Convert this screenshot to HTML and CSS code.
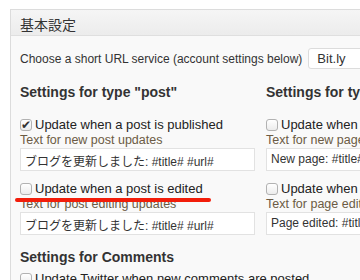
FILE: index.html
```html
<!DOCTYPE html>
<html lang="ja">
<head>
  <meta charset="UTF-8">
  <title>基本設定</title>
  <link rel="stylesheet" href="styles.css">
</head>
<body>
  <div class="panel">
    <div class="panel-head">基本設定</div>
    <div class="panel-body">
      <div class="service-row">
        <span>Choose a short URL service (account settings below)</span>
        <div class="select-box">Bit.ly</div>
      </div>

      <div class="columns">
        <div class="col">
          <h3>Settings for type "post"</h3>
          <label class="check"><span class="box checked"></span>Update when a post is published</label>
          <div class="hint">Text for new post updates</div>
          <div class="field">ブログを更新しました: #title# #url#</div>
          <label class="check marked"><span class="box"></span>Update when a post is edited<span class="mark"></span></label>
          <div class="hint">Text for post editing updates</div>
          <div class="field">ブログを更新しました: #title# #url#</div>
        </div>
        <div class="col">
          <h3>Settings for type "page"</h3>
          <label class="check"><span class="box"></span>Update when a page is published</label>
          <div class="hint">Text for new page updates</div>
          <div class="field">New page: #title# #url#</div>
          <label class="check"><span class="box"></span>Update when a page is edited</label>
          <div class="hint">Text for page editing updates</div>
          <div class="field">Page edited: #title# #url#</div>
        </div>
      </div>

      <h3 class="comments">Settings for Comments</h3>
      <label class="check"><span class="box"></span>Update Twitter when new comments are posted</label>
    </div>
  </div>
</body>
</html>
```

FILE: styles.css
```css
* { margin: 0; padding: 0; box-sizing: border-box; }
body {
  font-family: 'Liberation Sans', 'Noto Sans CJK JP', sans-serif;
  background: #ffffff;
  color: #222;
  width: 360px;
  height: 280px;
  overflow: hidden;
}
.panel {
  margin: 9px 0 0 10px;
  width: 560px;
  border: 1px solid #dcdcdc;
  border-right: none;
  background: #f9f9f9;
}
.panel-head {
  height: 26px;
  padding: 4px 0 0 9px;
  font-size: 14px;
  color: #333;
  background: linear-gradient(#f5f5f5, #ececec);
  border-bottom: 1px solid #dfdfdf;
}
.panel-body {
  padding: 0 9px;
}
.service-row {
  display: flex;
  align-items: center;
  gap: 6px;
  margin-top: 12px;
  font-size: 12px;
  color: #333;
}
.select-box {
  width: 100px;
  height: 21px;
  padding: 2px 0 0 8px;
  font-size: 13px;
  background: #fff;
  border: 1px solid #dcdcdc;
  border-radius: 3px;
}
.columns {
  display: flex;
  gap: 11px;
}
.col {
  width: 235px;
  flex: none;
}
h3 {
  font-size: 14px;
  font-weight: bold;
  color: #333;
  margin: 15px 0 17px;
}
.check {
  position: relative;
  display: flex;
  align-items: center;
  font-size: 13px;
  color: #222;
  line-height: 16px;
}
.box {
  width: 12px;
  height: 12px;
  margin-right: 3px;
  border: 1px solid #b2b2b2;
  border-radius: 3px;
  background: linear-gradient(#fff, #ececec);
}
.box.checked::after {
  content: "✔";
  display: block;
  font-size: 12px;
  line-height: 10px;
  color: #333;
}
.hint {
  font-size: 12.5px;
  color: #6b5b44;
  line-height: 15px;
}
.field {
  height: 23px;
  margin: 0 0 10px;
  padding: 3px 5px 3px 4px;
  font-size: 12px;
  color: #333;
  background: #fff;
  border: 1px solid #e2e2e2;
  white-space: nowrap;
  overflow: hidden;
}
.mark {
  position: absolute;
  left: -5px;
  top: 17px;
  width: 196px;
  height: 4px;
  border-radius: 2px;
  background: #f21d0a;
}
.comments {
  margin-top: 4px;
  margin-bottom: 6px;
}
```
